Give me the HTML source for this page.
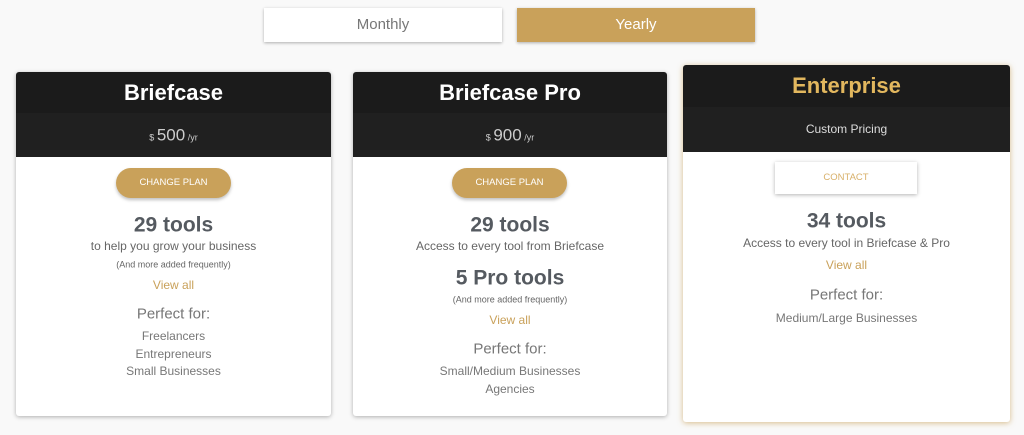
<!DOCTYPE html><html><head><style>
body{margin:0;width:1024px;height:435px;background:#f9f9f9;font-family:"Liberation Sans",sans-serif;position:relative;overflow:hidden}
.a{position:absolute}
.t{position:absolute;left:0;right:0;text-align:center;transform:translateY(-50%);line-height:1}
.card{position:absolute;background:#fff;box-shadow:0 1px 4px rgba(0,0,0,.3);border-radius:3px;overflow:hidden}
.h{position:absolute;left:0;right:0;top:0;background:#1b1b1b}
.b{position:absolute;left:0;right:0;background:#202020}
.g{color:#555a60}.gs{color:#666}.gr{color:#777}.go{color:#c9a15a}
</style></head><body>
<div class="a" style="left:264px;top:8px;width:238px;height:34px;background:#fff;box-shadow:0 1px 3px rgba(0,0,0,.3);color:#777;font-size:15px;text-align:center;line-height:34px">Monthly</div>
<div class="a" style="left:517px;top:8px;width:238px;height:34px;background:#c9a15a;box-shadow:0 1px 3px rgba(0,0,0,.3);color:#fff;font-size:15px;text-align:center;line-height:34px">Yearly</div>

<div class="card" style="left:16px;top:72px;width:315px;height:344px">
<div class="h" style="height:41px"><div class="t" style="top:21px;color:#fff;font-size:22px;font-weight:bold">Briefcase</div></div>
<div class="b" style="top:41px;height:44px"><div class="t" style="top:22px;color:#ccc;font-size:17px"><span style="font-size:9px">$ </span>500<span style="font-size:9px"> /yr</span></div></div>
<div class="a" style="left:100px;top:96px;width:115px;height:30px;border-radius:15px;background:#c9a15a;box-shadow:0 2px 3px rgba(0,0,0,.25);color:#fff;font-size:9.5px;text-align:center;line-height:30px">CHANGE PLAN</div>
<div class="t g" style="top:153px;font-size:21px;font-weight:bold">29 tools</div>
<div class="t gs" style="top:174px;font-size:12px">to help you grow your business</div>
<div class="t gs" style="top:193px;font-size:9px">(And more added frequently)</div>
<div class="t go" style="top:213px;font-size:12px">View all</div>
<div class="t gr" style="top:242px;font-size:15px">Perfect for:</div>
<div class="t gr" style="top:264px;font-size:12px">Freelancers</div>
<div class="t gr" style="top:282px;font-size:12px">Entrepreneurs</div>
<div class="t gr" style="top:299px;font-size:12px">Small Businesses</div>
</div>

<div class="card" style="left:353px;top:72px;width:314px;height:344px">
<div class="h" style="height:41px"><div class="t" style="top:21px;color:#fff;font-size:22px;font-weight:bold">Briefcase Pro</div></div>
<div class="b" style="top:41px;height:44px"><div class="t" style="top:22px;color:#ccc;font-size:17px"><span style="font-size:9px">$ </span>900<span style="font-size:9px"> /yr</span></div></div>
<div class="a" style="left:99px;top:96px;width:115px;height:30px;border-radius:15px;background:#c9a15a;box-shadow:0 2px 3px rgba(0,0,0,.25);color:#fff;font-size:9.5px;text-align:center;line-height:30px">CHANGE PLAN</div>
<div class="t g" style="top:153px;font-size:21px;font-weight:bold">29 tools</div>
<div class="t gs" style="top:174px;font-size:12px">Access to every tool from Briefcase</div>
<div class="t g" style="top:206px;font-size:21px;font-weight:bold">5 Pro tools</div>
<div class="t gs" style="top:228px;font-size:9px">(And more added frequently)</div>
<div class="t go" style="top:248px;font-size:12px">View all</div>
<div class="t gr" style="top:277px;font-size:15px">Perfect for:</div>
<div class="t gr" style="top:299px;font-size:12px">Small/Medium Businesses</div>
<div class="t gr" style="top:317px;font-size:12px">Agencies</div>
</div>

<div class="card" style="left:683px;top:65px;width:327px;height:357px;box-shadow:0 1px 6px rgba(201,161,90,.7)">
<div class="h" style="height:42px"><div class="t" style="top:21px;color:#e2b75e;font-size:22px;font-weight:bold">Enterprise</div></div>
<div class="b" style="top:42px;height:45px"><div class="t" style="top:22px;color:#ddd;font-size:12px">Custom Pricing</div></div>
<div class="a" style="left:92px;top:97px;width:142px;height:32px;background:#fff;box-shadow:0 1px 4px rgba(0,0,0,.3);color:#d8b06a;font-size:9.5px;text-align:center;line-height:32px">CONTACT</div>
<div class="t g" style="top:156px;font-size:21px;font-weight:bold">34 tools</div>
<div class="t gs" style="top:178px;font-size:12px">Access to every tool in Briefcase &amp; Pro</div>
<div class="t go" style="top:200px;font-size:12px">View all</div>
<div class="t gr" style="top:230px;font-size:15px">Perfect for:</div>
<div class="t gr" style="top:253px;font-size:12px">Medium/Large Businesses</div>
</div>
</body></html>
